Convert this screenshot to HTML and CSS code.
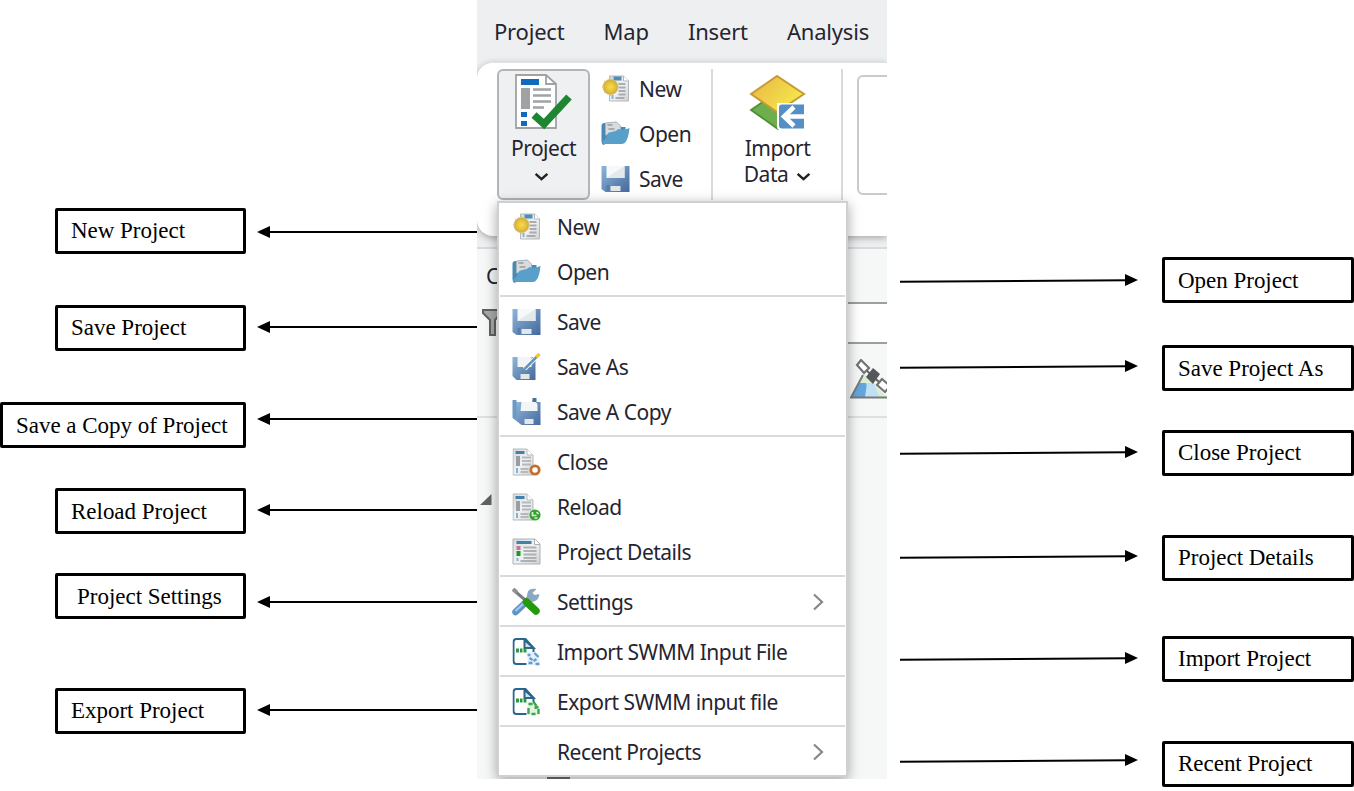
FILE: index.html
```html
<!DOCTYPE html>
<html lang="en">
<head>
    <meta charset="UTF-8">
    <meta name="viewport" content="width=device-width, initial-scale=1.0">
    <title>Project menu</title>
    <link rel="stylesheet" href="styles.css">
</head>
<body>
    <!-- shared icons -->
    <svg class="sprite" width="0" height="0">
        <defs>
            <linearGradient id="steel" x1="0" y1="0" x2="1" y2="1">
                <stop offset="0" stop-color="#8fb5d9"/>
                <stop offset="1" stop-color="#44699c"/>
            </linearGradient>
            <linearGradient id="gold" x1="0" y1="0" x2="1" y2="0.6">
                <stop offset="0" stop-color="#e9b444"/>
                <stop offset="1" stop-color="#f5e84c"/>
            </linearGradient>
            <radialGradient id="sun">
                <stop offset="0" stop-color="#f7dc45"/>
                <stop offset="0.6" stop-color="#e6c33b"/>
                <stop offset="1" stop-color="#cda63f"/>
            </radialGradient>
            <linearGradient id="paper" x1="0" y1="0" x2="1" y2="1">
                <stop offset="0" stop-color="#d4d7da"/>
                <stop offset="0.5" stop-color="#f1f2f3"/>
                <stop offset="1" stop-color="#cfd2d5"/>
            </linearGradient>
        </defs>
        <symbol id="i-new" viewBox="0 0 28 28">
            <path d="M8 1h14l5 5v20H8z" fill="url(#paper)" stroke="#b4b7ba"/>
            <path d="M22 1v5h5" fill="#fff" stroke="#b4b7ba"/>
            <path d="M12 3.500h8" stroke="#4b8fb8" stroke-width="4"/>
            <path d="M17 9h7M17 12.500h7M17 16h7M17 19.500h7M14 23h9" stroke="#a9adb1" stroke-width="2"/>
            <path d="M11 20v4" stroke="#7eb4dd" stroke-width="2"/>
            <circle cx="9" cy="12" r="7.500" fill="url(#sun)" stroke="#d8bd6d"/>
            <path d="M9 3v2M9 19v2M.5 12h2M3 6l1 1M3 18l1-1" stroke="#dec684" stroke-width="1.500"/>
        </symbol>
        <symbol id="i-open" viewBox="0 0 28 28">
            <path d="M0 6q0-3 3-3h9l2 4h10v6L2 25q-2-1-2-4z" fill="#4a89b4"/>
            <path d="M4 3l11-1 4 4v9H4z" fill="#d9dbdd" stroke="#a7b1b9"/>
            <path d="M6 5h5M7 9h6" stroke="#929ca4" stroke-width="1.500"/>
            <path d="M6 14q1-2 4-2 4 0 7-3 5 2 11-1-1 10-4 14-1 2-4 2H3q-2 0-3-2 4-2 6-8z" fill="#589fca"/>
        </symbol>
        <symbol id="i-save" viewBox="0 0 28 28">
            <path d="M0 1h28v26H4l-4-3z" fill="url(#steel)"/>
            <path d="M5 1h18v12H5z" fill="#f6f8fa"/>
            <path d="M5 13l18-12v12z" fill="#e3e8ed"/>
            <path d="M9 21h10v5H9z" fill="#e4e7ea"/>
            <path d="M5 20h3v6H5z" fill="#587ea8"/>
        </symbol>
        <symbol id="i-saveas" viewBox="0 0 28 28">
            <path d="M0 4h23v23H4l-4-4z" fill="url(#steel)"/>
            <path d="M5 4h14v10H5z" fill="#f2f5f7"/>
            <path d="M8 21h9v5H8z" fill="#e4e7ea"/>
            <path d="M12 16L24 4" stroke="#fff" stroke-width="4.500"/>
            <path d="M12 16L24 4" stroke="#6694b4" stroke-width="2.500"/>
            <path d="M24 4l3-3" stroke="#f0c62c" stroke-width="3.500"/>
        </symbol>
        <symbol id="i-savecopy" viewBox="0 0 28 28">
            <path d="M0 2h23v21H4l-4-3z" fill="#6c9ac4"/>
            <path d="M4 4h24v23H9l-5-4z" fill="url(#steel)"/>
            <path d="M4 0h16v4H4z" fill="#fff"/>
            <path d="M9 4h14l2 2v7H8z" fill="#f2f5f7"/>
            <path d="M20 0h4v4h-4z" fill="#476f99"/>
            <path d="M12 21h9v5h-9z" fill="#e4e7ea"/>
        </symbol>
        <symbol id="i-doc" viewBox="0 0 28 28">
            <path d="M.5 1h14l6 6v20H.5z" fill="url(#paper)" stroke="#b5b8bb"/>
            <path d="M14.500 1v6h6" fill="#fff" stroke="#b5b8bb"/>
            <path d="M3 4.500h9" stroke="#3f83ad" stroke-width="3"/>
            <path d="M5.500 8v10" stroke="#9a9ea2" stroke-width="4"/>
            <path d="M9.500 9.500h9M9.500 13h9M9.500 16.500h9M8 21h8M8 24h8" stroke="#b5b9bc" stroke-width="2"/>
            <path d="M4.500 20v5" stroke="#7db5df" stroke-width="2"/>
        </symbol>
        <symbol id="i-close" viewBox="0 0 28 28">
            <use href="#i-doc"/>
            <circle cx="22.500" cy="22" r="4.200" fill="#fff" stroke="#c56f2f" stroke-width="2.800"/>
        </symbol>
        <symbol id="i-reload" viewBox="0 0 28 28">
            <use href="#i-doc"/>
            <circle cx="22.500" cy="22" r="5.600" fill="#38a02e"/>
            <path d="M20 19v3.500h4M24 19l2 2M22 25h3" fill="none" stroke="#d5efd0" stroke-width="1.700"/>
        </symbol>
        <symbol id="i-details" viewBox="0 0 28 28">
            <path d="M.5 1h22l5 5v20H.5z" fill="url(#paper)" stroke="#aeb1b4"/>
            <path d="M22 1v5.500h5.500" fill="#fff" stroke="#aeb1b4"/>
            <path d="M4 4.500h15" stroke="#3f83ad" stroke-width="3"/>
            <path d="M4 8h4v4H4z" fill="#c274a2"/>
            <path d="M4 13h4v5H4z" fill="#17a01d"/>
            <path d="M5 20v3" stroke="#7db5df" stroke-width="2"/>
            <path d="M11 9.500h13M11 13h13M11 16.500h13M11 20h13M8 23h16" stroke="#aeb2b5" stroke-width="1.800"/>
        </symbol>
        <symbol id="i-settings" viewBox="0 0 28 28">
            <path d="M3 24L18 10" stroke="#5d95c8" stroke-width="6.500" stroke-linecap="round"/>
            <path d="M3 23L16 11" stroke="#a2cbec" stroke-width="2"/>
            <path d="M24 1q-8-1-9 4l-1 5 4 4q8 0 9-8l-5 1-2-2z" fill="#8ba7c1"/>
            <path d="M1 2l14 12" stroke="#797d80" stroke-width="3"/>
            <path d="M.5 1l4 3.500" stroke="#8f9396" stroke-width="4"/>
            <path d="M14 14l9.500 9" stroke="#229a0c" stroke-width="7.500" stroke-linecap="round"/>
        </symbol>
        <symbol id="i-file" viewBox="0 0 28 28">
            <path d="M14 26H4q-3 0-3-3V4q0-3 3-3h9l8 9v5" fill="#fff" stroke="#2a668c" stroke-width="2"/>
            <path d="M12 2v8h9z" fill="#d5e1e9" stroke="#2a668c" stroke-width="2"/>
            <path d="M3.500 12.500h3M7.500 12.500h2.500M11 12.500h3" stroke="#2e9a40" stroke-width="4"/>
        </symbol>
        <symbol id="i-import" viewBox="0 0 28 28">
            <use href="#i-file"/>
            <path d="M15 14h7l5 5v8H15z" fill="#e5f1fb"/>
            <path d="M15 17h3M22 15l4 4M17 20l3 2M24 21l-3 2M16 25h4M23 26h4" stroke="#659dd2" stroke-width="2.400"/>
        </symbol>
        <symbol id="i-export" viewBox="0 0 28 28">
            <use href="#i-file"/>
            <path d="M15 14h7l5 5v8H15z" fill="#e1f3e2"/>
            <path d="M16 16h4M21 14l3 4M16 20v6M19 26h4M22 20l4-1M26 21v5" stroke="#41a34c" stroke-width="2.400"/>
        </symbol>
        <symbol id="i-project" viewBox="0 0 58 58">
            <path d="M1 1h30l10 9v44H1z" fill="#fff" stroke="#a0a2a4" stroke-width="1.800"/>
            <path d="M31 1v9h10" fill="none" stroke="#a0a2a4" stroke-width="1.800"/>
            <path d="M6 5h18v6H6z" fill="#0f6cbd"/>
            <path d="M6 14h9v21H6z" fill="#a0a2a4"/>
            <path d="M18 15.500h18M18 21.500h18M18 27.500h18M18 33.500h11" stroke="#a0a2a4" stroke-width="2.400"/>
            <path d="M6 38h6v5H6zM6 47h6v5H6z" fill="#0f6cbd"/>
            <path d="M19 41l10 9 25-27" fill="none" stroke="#1e8530" stroke-width="7.500"/>
        </symbol>
        <symbol id="i-layers" viewBox="0 0 58 58">
            <path d="M2 35l13-9 26 18-12 10z" fill="#6eae4c" stroke="#4d8f36" stroke-width="1.800"/>
            <path d="M2 19L28 1l27 18-27 18z" fill="url(#gold)" stroke="#c69a35" stroke-width="2"/>
            <path d="M28 28h28v27H31q-3 0-3-3z" fill="#fff"/>
            <path d="M33 29.500h22v24H33q-3 0-3-3v-18q0-3 3-3z" fill="#568fc6"/>
            <path d="M55 41.500H36M45 32L35 41.500 45 51" fill="none" stroke="#fff" stroke-width="4.500"/>
        </symbol>
        <symbol id="i-left" viewBox="0 0 220 14">
            <path d="M10 7h210" stroke="#000" stroke-width="2"/>
            <path d="M0 7l13-6v12z"/>
        </symbol>
        <symbol id="i-right" viewBox="0 0 238 14">
            <path d="M0 7.700L228 6.200" stroke="#000" stroke-width="2"/>
            <path d="M238 6l-13-6v12z"/>
        </symbol>
    </svg>

    <div class="diagram">
        <div class="callouts callouts-left">
            <div class="callout"><span class="label">New Project</span><svg class="arrow"><use href="#i-left"/></svg></div>
            <div class="callout save"><span class="label">Save Project</span><svg class="arrow"><use href="#i-left"/></svg></div>
            <div class="callout copy"><span class="label wide low">Save a Copy of Project</span><svg class="arrow"><use href="#i-left"/></svg></div>
            <div class="callout reload"><span class="label low">Reload Project</span><svg class="arrow"><use href="#i-left"/></svg></div>
            <div class="callout settings"><span class="label low">Project Settings</span><svg class="arrow"><use href="#i-left"/></svg></div>
            <div class="callout export"><span class="label">Export Project</span><svg class="arrow"><use href="#i-left"/></svg></div>
        </div>

        <div class="app">
            <div class="tabs">
                <span class="tab">Project</span>
                <span class="tab">Map</span>
                <span class="tab">Insert</span>
                <span class="tab">Analysis</span>
            </div>
            <div class="ribbon">
                <div class="project-btn">
                    <svg class="big-icon"><use href="#i-project"/></svg>
                    <span>Project</span>
                    <svg class="caret" viewBox="0 0 14 8"><path d="M1.500 1.500L7 6.500l5.500-5"/></svg>
                </div>
                <div class="file-btns">
                    <div class="file-btn"><svg class="icon"><use href="#i-new"/></svg>New</div>
                    <div class="file-btn"><svg class="icon"><use href="#i-open"/></svg>Open</div>
                    <div class="file-btn"><svg class="icon"><use href="#i-save"/></svg>Save</div>
                </div>
                <div class="import-btn">
                    <svg class="big-icon"><use href="#i-layers"/></svg>
                    <span>Import</span>
                    <span>Data <svg class="caret" viewBox="0 0 14 8"><path d="M1.500 1.500L7 6.500l5.500-5"/></svg></span>
                </div>
                <div class="gallery"></div>
            </div>
            <div class="pane">
                <div class="pane-title">C</div>
                <div class="pane-search">
                    <svg class="funnel" viewBox="0 0 20 28"><path d="M1 1h18v3l-6 7v15H8V11L1 4z"/></svg>
                    <div class="search-box"></div>
                </div>
                <div class="pane-tools">
                    <svg class="satellite" viewBox="0 0 37 42">
                        <path d="M1 38L14 14l4 5 9 9 10 10z" fill="#d9eed3"/>
                        <path d="M2 38l7-14h7l2 5 7 1 4 8z" fill="#62a5df"/>
                        <path d="M15 38l2-14h7l5 14z" fill="#c0e0f3"/>
                        <path d="M13 16L1 38.500h36" fill="none" stroke="#77797b" stroke-width="2"/>
                        <path d="M15 10l14 13" stroke="#606264" stroke-width="2"/>
                        <path d="M11 1l8 8-5 5-7-8zM32 20l8 7-5 6-8-7z" fill="#fff" stroke="#707274" stroke-width="2.200"/>
                        <path d="M23 9l7 6-7 10-7-7z" fill="#55575a"/>
                    </svg>
                </div>
                <svg class="twisty" viewBox="0 0 12 11"><path d="M11.500 0v11H0z"/></svg>
            </div>

            <div class="menu">
                <div class="item"><svg class="icon"><use href="#i-new"/></svg>New</div>
                <div class="item"><svg class="icon"><use href="#i-open"/></svg>Open</div>
                <hr>
                <div class="item"><svg class="icon"><use href="#i-save"/></svg>Save</div>
                <div class="item"><svg class="icon"><use href="#i-saveas"/></svg>Save As</div>
                <div class="item"><svg class="icon"><use href="#i-savecopy"/></svg>Save A Copy</div>
                <hr>
                <div class="item"><svg class="icon"><use href="#i-close"/></svg>Close</div>
                <div class="item"><svg class="icon"><use href="#i-reload"/></svg>Reload</div>
                <div class="item"><svg class="icon"><use href="#i-details"/></svg>Project Details</div>
                <hr>
                <div class="item"><svg class="icon"><use href="#i-settings"/></svg>Settings<svg class="more" viewBox="0 0 12 18"><path d="M2 1.500L10 9l-8 7.500"/></svg></div>
                <hr>
                <div class="item"><svg class="icon"><use href="#i-import"/></svg>Import SWMM Input File</div>
                <hr>
                <div class="item"><svg class="icon"><use href="#i-export"/></svg>Export SWMM input file</div>
                <hr>
                <div class="item"><span class="icon"></span>Recent Projects<svg class="more" viewBox="0 0 12 18"><path d="M2 1.500L10 9l-8 7.500"/></svg></div>
            </div>
            <div class="taskbar-mark"></div>
        </div>

        <div class="callouts callouts-right">
            <div class="callout"><svg class="arrow"><use href="#i-right"/></svg><span class="label low">Open Project</span></div>
            <div class="callout save-as"><svg class="arrow"><use href="#i-right"/></svg><span class="label low">Save Project As</span></div>
            <div class="callout close"><svg class="arrow"><use href="#i-right"/></svg><span class="label">Close Project</span></div>
            <div class="callout details"><svg class="arrow"><use href="#i-right"/></svg><span class="label">Project Details</span></div>
            <div class="callout import"><svg class="arrow"><use href="#i-right"/></svg><span class="label">Import Project</span></div>
            <div class="callout recent"><svg class="arrow"><use href="#i-right"/></svg><span class="label">Recent Project</span></div>
        </div>
    </div>
</body>
</html>
```
FILE: styles.css
```css
* {
    box-sizing: border-box;
}
body {
    margin: 0;
    background: white;
    overflow: hidden;
}
svg {
    display: block;
    flex-shrink: 0;
}
.sprite {
    position: absolute;
}
.diagram {
    display: flex;
    align-items: flex-start;
    width: 1354px;
    height: 791px;
}

/* callouts */
.callouts {
    display: flex;
    flex-direction: column;
    font-family: "Liberation Serif", "Times New Roman", serif;
    font-size: 23px;
    letter-spacing: -0.02px;
    color: black;
}
.callouts-left {
    width: 477px;
    padding-top: 208px;
}
.callouts-right {
    width: 467px;
    padding: 257px 0 0 13px;
}
.callout {
    display: flex;
    align-items: flex-start;
    height: 46px;
}
.callouts-left .callout {
    justify-content: flex-end;
}
.label {
    width: 191px;
    height: 46px;
    padding-left: 13px;
    border: 3px solid black;
    border-radius: 2px;
    line-height: 39px;
    white-space: nowrap;
}
.label.low {
    line-height: 41px;
}
.label.wide {
    width: 246px;
}
.callouts-left .arrow {
    width: 220px;
    height: 14px;
    margin: 17px 0 0 11px;
}
.callouts-right .arrow {
    width: 238px;
    height: 14px;
    margin: 17px 24px 0 0;
}
.callouts-right .label {
    width: 192px;
}
.callout.save,
.callout.copy {
    margin-top: 51px;
}
.callout.reload {
    margin-top: 40px;
}
.callout.settings {
    margin-top: 39px;
}
.callout.settings .label {
    padding-left: 19px;
}
.callout.export {
    margin-top: 69px;
}
.callout.save .arrow,
.callout.reload .arrow,
.callout.export .arrow {
    margin-top: 15px;
}
.callout.copy .arrow {
    margin-top: 10px;
}
.callout.settings .arrow {
    margin-top: 22px;
}
.callout.save-as {
    margin-top: 42px;
}
.callout.close {
    margin-top: 39px;
}
.callout.details,
.callout.recent {
    margin-top: 59px;
}
.callout.import {
    margin-top: 55px;
}
.callout.save-as .arrow,
.callout.details .arrow {
    margin-top: 15px;
}
.callout.close .arrow,
.callout.import .arrow {
    margin-top: 16px;
}
.callout.recent .arrow {
    margin-top: 13px;
}

/* application window */
.app {
    position: relative;
    width: 410px;
    height: 779px;
    overflow: hidden;
    background: #eeeff1;
    font-family: "Noto Sans", "Open Sans", sans-serif;
    font-size: 21px;
    letter-spacing: -0.5px;
    color: #252430;
}
.tabs {
    display: flex;
    justify-content: space-between;
    height: 62px;
    padding: 0 18px 0 17px;
    font-size: 22px;
    letter-spacing: -0.2px;
    line-height: 63px;
}
.ribbon {
    display: flex;
    height: 174px;
    padding: 6px 0 0 20px;
    border-top: 1px solid #e0e3e4;
    border-radius: 16px 0 0 16px;
    background: white;
    box-shadow: 0 2px 7px rgba(0, 0, 0, 0.3);
}
.project-btn {
    display: flex;
    flex-direction: column;
    align-items: center;
    width: 93px;
    height: 131px;
    padding-top: 3px;
    border: 2px solid #b3b5b7;
    border-radius: 6px;
    background: #eff0f1;
    line-height: 32px;
}
.big-icon {
    width: 58px;
    height: 58px;
}
.caret {
    width: 15px;
    height: 9px;
    margin-top: 8px;
    fill: none;
    stroke: #222;
    stroke-width: 2.3;
}
.project-btn .caret {
    margin-right: 4px;
}
.file-btns {
    width: 123px;
    height: 131px;
    padding-left: 11px;
    border-right: 2px solid #d8dadc;
}
.file-btn {
    display: flex;
    align-items: center;
    gap: 9px;
    height: 45px;
    margin-top: -3px;
}
.file-btn + .file-btn {
    margin-top: 0;
}
.import-btn {
    display: flex;
    flex-direction: column;
    align-items: center;
    width: 130px;
    height: 131px;
    padding: 6px 0 0 1px;
    border-right: 2px solid #d8dadc;
    line-height: 26px;
}
.import-btn .big-icon {
    margin-bottom: 2px;
}
.import-btn .caret {
    display: inline-block;
    margin: 0 0 1px 3px;
}
.gallery {
    width: 60px;
    height: 120px;
    margin: 6px -30px 0 14px;
    flex-shrink: 0;
    border: 2px solid #c8cacc;
    border-radius: 6px;
}
.pane {
    height: 532px;
    margin-top: 11px;
    border-top: 2px solid #d8dadb;
    background: #f6f8f8;
}
.pane-title {
    height: 53px;
    padding-left: 9px;
    line-height: 54px;
}
.pane-search {
    display: flex;
    height: 42px;
    padding-left: 5px;
}
.funnel {
    width: 20px;
    height: 28px;
    margin-top: 7px;
    fill: #a6a8aa;
    stroke: #5f6163;
    stroke-width: 2;
}
.search-box {
    flex: 1;
    border: 2px solid #9c9e9f;
    border-right: 0;
    background: white;
}
.pane-tools {
    height: 74px;
    padding: 15px 0 0 373px;
    border-bottom: 2px solid #dddfe0;
}
.satellite {
    width: 37px;
    height: 42px;
}
.twisty {
    width: 12px;
    height: 11px;
    margin: 76px 0 0 3px;
    fill: #606264;
}

/* dropdown lies over the ribbon and the pane */
.menu {
    position: absolute;
    left: 20px;
    top: 201px;
    width: 351px;
    height: 576px;
    padding-top: 2px;
    border: 2px solid #cfd0d3;
    background: white;
    box-shadow: 0 3px 12px rgba(0, 0, 0, 0.35);
}
.item {
    display: flex;
    align-items: center;
    gap: 16px;
    height: 45px;
    padding: 0 22px 2px 13px;
    white-space: nowrap;
}
.icon {
    width: 29px;
    height: 28px;
}
.menu hr {
    height: 2px;
    margin: 0 1px 3px;
    border: 0;
    background: #d9dadc;
}
.more {
    width: 12px;
    height: 18px;
    margin-left: auto;
    fill: none;
    stroke: #85878a;
    stroke-width: 2.2;
}
.taskbar-mark {
    position: absolute;
    left: 70px;
    bottom: 0;
    width: 23px;
    height: 2px;
    background: #55565a;
}
```
